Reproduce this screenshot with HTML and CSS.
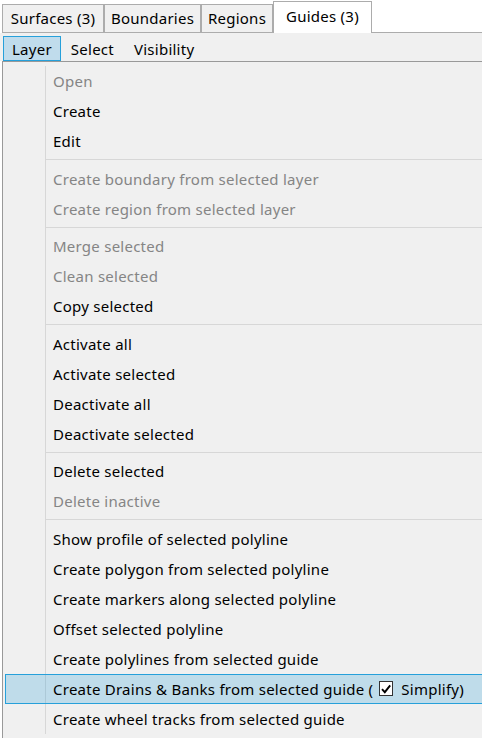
FILE: index.html
```html
<!DOCTYPE html>
<html>
<head>
<meta charset="utf-8">
<link rel="stylesheet" href="styles.css">
</head>
<body>
<div class="tabs">
  <div class="tab t1">Surfaces (3)</div>
  <div class="tab t2">Boundaries</div>
  <div class="tab t3">Regions</div>
  <div class="tab t4 active">Guides (3)</div>
  <div class="tab-fill"></div>
</div>
<div class="menubar">
  <div class="mb-item open">Layer</div>
  <div class="mb-item">Select</div>
  <div class="mb-item">Visibility</div>
</div>
<div class="popup">
  <div class="list">
    <div class="item disabled">Open</div>
    <div class="item">Create</div>
    <div class="item">Edit</div>
    <div class="sep"></div>
    <div class="item disabled">Create boundary from selected layer</div>
    <div class="item disabled">Create region from selected layer</div>
    <div class="sep"></div>
    <div class="item disabled">Merge selected</div>
    <div class="item disabled">Clean selected</div>
    <div class="item">Copy selected</div>
    <div class="sep"></div>
    <div class="item">Activate all</div>
    <div class="item">Activate selected</div>
    <div class="item">Deactivate all</div>
    <div class="item">Deactivate selected</div>
    <div class="sep"></div>
    <div class="item">Delete selected</div>
    <div class="item disabled">Delete inactive</div>
    <div class="sep"></div>
    <div class="item">Show profile of selected polyline</div>
    <div class="item">Create polygon from selected polyline</div>
    <div class="item">Create markers along selected polyline</div>
    <div class="item">Offset selected polyline</div>
    <div class="item">Create polylines from selected guide</div>
    <div class="item hot">Create Drains &amp; Banks from selected guide (<span class="check"><svg width="12" height="12" viewBox="0 0 12 12"><path d="M2 6.2 L4.8 9.2 L10.2 2.4" fill="none" stroke="#000" stroke-width="1.9"/></svg></span> Simplify)</div>
    <div class="item">Create wheel tracks from selected guide</div>
  </div>
</div>
</body>
</html>
```

FILE: styles.css
```css
html, body {
  margin: 0;
  padding: 0;
  background: #ffffff;
  overflow: hidden;
  width: 482px;
  height: 738px;
}
body {
  font-family: "Noto Sans", "Open Sans", sans-serif;
  font-size: 15px;
  letter-spacing: 0.25px;
  color: #000;
}
.tabs {
  display: flex;
  align-items: flex-end;
  height: 33px;
  padding-left: 2px;
}
.tab {
  box-sizing: border-box;
  height: 29px;
  border: 1px solid #acacac;
  background: #f0f0f0;
  display: flex;
  align-items: center;
  justify-content: center;
  padding-bottom: 1px;
}
.t1 { width: 102px; }
.t2 { width: 97px; }
.t3 { width: 72px; }
.t4 { width: 99px; }
.tab.active {
  height: 32px;
  background: #ffffff;
  border-bottom: none;
  padding-bottom: 4px;
}
.tab-fill {
  flex: 1;
  height: 0;
  border-bottom: 1px solid #acacac;
}
.menubar {
  display: flex;
  align-items: flex-end;
  height: 28px;
  padding-left: 3px;
  background: #f0f0f0;
}
.mb-item {
  box-sizing: border-box;
  height: 25px;
  border: 1px solid transparent;
  padding: 0 9px;
  display: flex;
  align-items: center;
}
.mb-item.open {
  background: #c0dcec;
  border-color: #26a0da;
  padding: 0 8px;
}
.popup {
  margin-left: 2px;
  border-top: 1px solid #999999;
  border-left: 1px solid #999999;
  background: #f0f0f0;
  padding: 4px 0 0 2px;
  height: 800px;
}
.list {
  background: linear-gradient(to right, transparent 40px, #d7d7d7 40px, #d7d7d7 41px, transparent 41px);
}
.item {
  box-sizing: border-box;
  height: 30px;
  border: 1px solid transparent;
  border-right: none;
  padding-left: 47px;
  display: flex;
  align-items: center;
  white-space: nowrap;
}
.item.disabled {
  color: #858585;
}
.item.hot {
  background: rgba(38, 160, 218, 0.24);
  border-color: #26a0da;
}
.sep {
  height: 7.6px;
  margin-left: 41px;
  box-sizing: border-box;
  padding-top: 3px;
}
.sep::before {
  content: "";
  display: block;
  height: 1px;
  background: #d7d7d7;
}
.check {
  display: inline-flex;
  align-items: center;
  justify-content: center;
  box-sizing: border-box;
  width: 14px;
  height: 15px;
  border: 1px solid #333333;
  background: #ffffff;
  margin: 0 8px 0 6px;
}
```
